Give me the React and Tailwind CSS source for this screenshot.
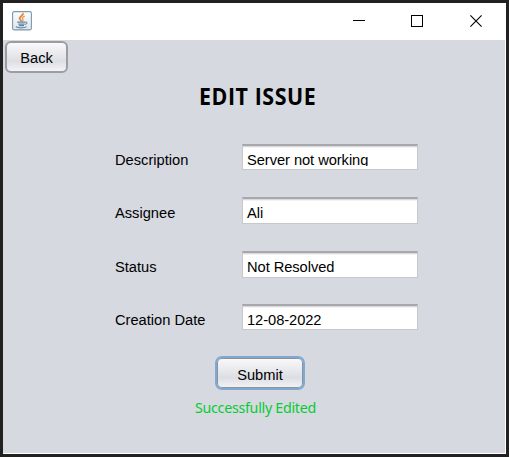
import React from "react";

function JavaIcon() {
  return (
    <svg width="20" height="20" viewBox="0 0 20 20" fill="none">
      <defs>
        <linearGradient id="tile" x1="0" y1="0" x2="0" y2="1">
          <stop offset="0" stopColor="#fdfefe" />
          <stop offset="1" stopColor="#dfe5e9" />
        </linearGradient>
      </defs>
      <rect x="0.6" y="0.6" width="18.8" height="18.3" rx="1.6" fill="url(#tile)" stroke="#7d99ac" strokeWidth="1.1" />
      <path d="M10.8 2.2C12 4.5 6.8 5.7 7.6 7.6C8 8.6 9.2 9.2 9.4 10.5" stroke="#e9843c" strokeWidth="1.8" />
      <path d="M12.8 5.2C9.8 6.4 10.2 7.4 10.8 8.4C11.2 9.2 10.8 9.8 10.2 10.4" stroke="#ee9c5e" strokeWidth="1.4" />
      <path d="M5.2 11.2H13M6.2 13.1H12.6M7 14.7H12" stroke="#5d86a6" strokeWidth="1.3" />
      <path d="M13 11.2C16 10.6 15.6 13 12.8 13.4" stroke="#7597b1" strokeWidth="1.1" />
      <path d="M4 15.4C5 17.3 13 17.2 14.6 15.6" stroke="#6e92ae" strokeWidth="1.2" />
    </svg>
  );
}

function TitleBar() {
  return (
    <div className="flex h-[37px] shrink-0 items-start bg-white pl-[9px] pt-2">
      <JavaIcon />
      <svg className="ml-auto mr-[21px] mt-1" width="131" height="13" viewBox="0 0 131 13" fill="none" stroke="#000">
        <path d="M0 5.5H12" />
        <rect x="58.5" y="0.5" width="11" height="11" />
        <path d="M117.4 0.4L128.6 11.6M128.6 0.4L117.4 11.6" strokeWidth="1.1" />
      </svg>
    </div>
  );
}

const fields = [
  { label: "Description", value: "Server not working", row: "h-[53px]", box: "h-[26px]", text: "h-[22px] overflow-hidden" },
  { label: "Assignee", value: "Ali", row: "h-[54px]", box: "h-[27px]", text: "h-[25px]" },
  { label: "Status", value: "Not Resolved", row: "h-[53px]", box: "h-[27px]", text: "h-[25px]" },
  { label: "Creation Date", value: "12-08-2022", row: "h-[53px]", box: "h-[26px]", text: "h-[25px]" },
];

function Field({ label, value, row, box, text }) {
  return (
    <div className={`flex shrink-0 items-start leading-[32px] ${row}`}>
      <div className="w-[127px] whitespace-nowrap">{label}</div>
      <div className={`w-[176px] border border-t-2 border-[#c6c8cc] border-t-[#a6a8ac] bg-white shadow-[inset_0_1px_0_#d9dadd,inset_0_2px_0_#f3f3f4] ${box}`}>
        <div className={`-mt-0.5 whitespace-nowrap pl-1 tracking-[-0.05px] ${text}`}>{value}</div>
      </div>
    </div>
  );
}

export default function App() {
  return (
    <div className="h-[457px] w-[509px] overflow-hidden bg-[#212121] p-[3px] font-['Liberation_Sans',Arial,sans-serif] text-[14.67px] text-black">
      <div className="flex h-[451px] w-[503px] flex-col bg-white pb-px pr-px">
        <TitleBar />
        <main className="flex min-h-0 flex-1 flex-col bg-[#d6d9e0] pt-px">
          <button className="ml-[2px] flex h-8 w-[63px] shrink-0 items-center justify-center rounded-[6px] border-2 border-[#9b9da2] bg-[linear-gradient(#fafafb,#e4e5e9_50%,#dcdee4_65%,#f2f4f8)] pt-px">
            Back
          </button>
          <h1 className="ml-[196px] mt-[9px] h-[30px] w-max shrink-0 origin-left scale-x-[0.95] whitespace-nowrap font-['Open_Sans','Noto_Sans',sans-serif] text-[22.5px] font-bold leading-[30px] tracking-[0.6px]">
            EDIT ISSUE
          </h1>
          <section className="ml-[112px] mt-8 flex flex-col">
            {fields.map((f) => <Field key={f.label} {...f} />)}
          </section>
          <button className="-mt-px ml-[212px] flex h-[34px] w-[90px] shrink-0 items-center justify-center rounded-[7px] border-2 border-[#7fa9d0] bg-[linear-gradient(#fafafb,#e4e5e9_50%,#dcdee4_65%,#f2f4f8)] pt-[3px] shadow-[inset_0_0_0_1px_#8d939d]">
            Submit
          </button>
          <p className="ml-[192px] mt-[7px] h-5 w-max shrink-0 origin-left scale-x-[0.95] whitespace-nowrap font-['Noto_Sans',sans-serif] text-[15px] leading-5 tracking-[-0.3px] text-[#05cc33]">
            Successfully Edited
          </p>
        </main>
      </div>
    </div>
  );
}
